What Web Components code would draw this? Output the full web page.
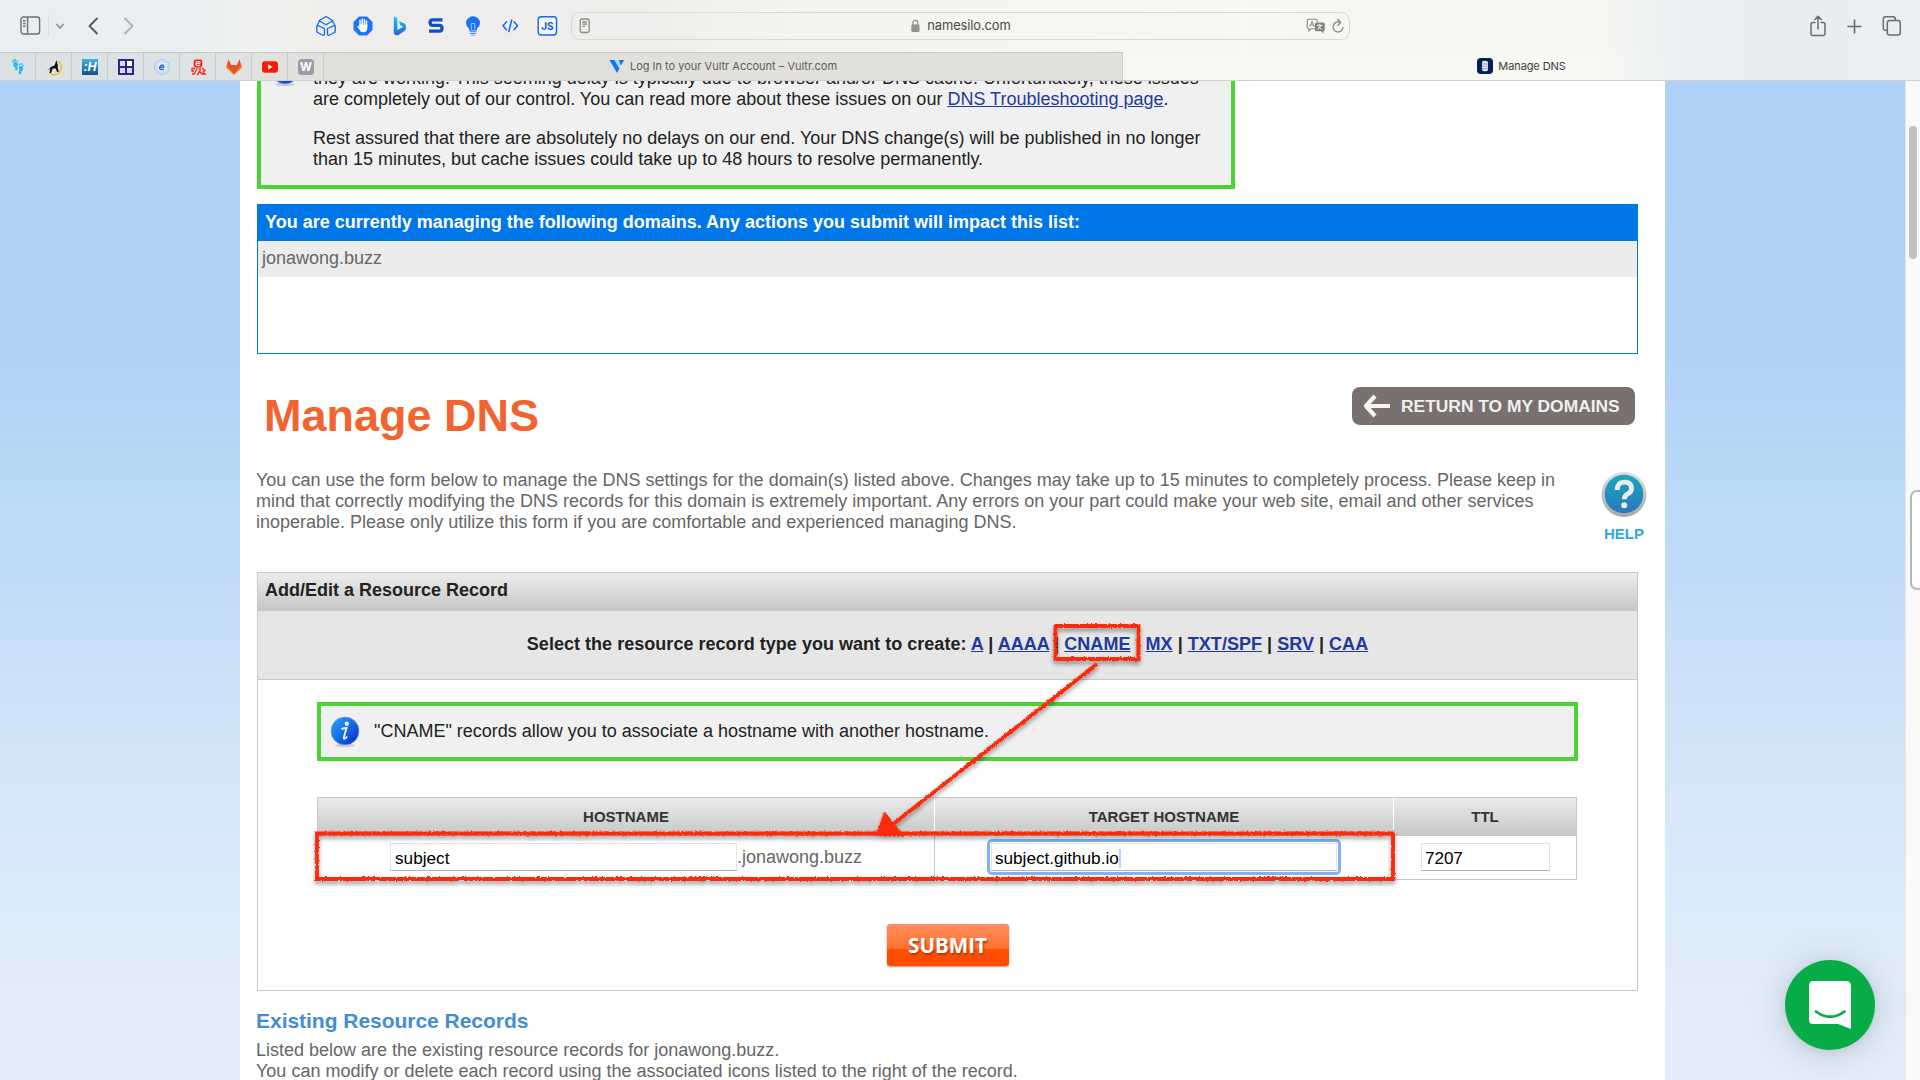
<!DOCTYPE html>
<html lang="en">
<head>
<meta charset="utf-8">
<title>Manage DNS</title>
<style>
html,body{margin:0;height:1080px;overflow:hidden}
body{font-family:"Liberation Sans",Arial,sans-serif;font-size:18px;line-height:21px;color:#222;display:flex;flex-direction:column;background:#fff}
</style>
</head>
<body>
<browser-toolbar></browser-toolbar>
<tab-strip></tab-strip>
<dns-page></dns-page>
<script>
const define=(name,html)=>{
  const t=document.createElement('template');t.innerHTML=html;
  customElements.define(name,class extends HTMLElement{
    constructor(){super();this.attachShadow({mode:'open'}).append(t.content.cloneNode(true));}
  });
};

define('browser-toolbar',`
<style>
:host{display:flex;flex:none;height:52px;box-sizing:border-box;align-items:center;background:linear-gradient(90deg,#e8eef2 0,#e9eef1 180px,#f1f2ef 265px,#eeedeb 340px,#efeeec 650px,#f3f4ef 780px,#f7f8f3 1240px,#f6f7f2 1600px,#ebf0f3 1680px,#e7edf1 1780px,#eceff1 1920px);font:14px Inter,sans-serif;color:#4a4a48}
svg{display:block;overflow:visible;flex:none}
.nav{display:flex;align-items:center;width:315px;padding-left:20px;box-sizing:border-box}
.nav i{width:1px;height:22px;background:#d8dde0;margin:0 5px 0 7px}
.ext{display:flex;width:256px;gap:14.8px;align-items:center}
.addr{display:flex;align-items:center;width:779px;height:28px;border:1px solid #d8d8d5;border-radius:9px;box-sizing:border-box;padding:0 4px 0 7px}
.mid{flex:1;display:flex;justify-content:center;align-items:center;gap:7px;padding-left:25px}
.host{font-size:12.9px;letter-spacing:-.1px;line-height:20px}
.end{margin-left:auto;display:flex;align-items:center;gap:19px;padding-right:18px}
</style>
<div class="nav">
 <svg width="21" height="20" viewBox="0 0 21 20" fill="none" stroke="#6c7174" stroke-width="1.4"><rect x="1" y="1" width="18.6" height="17" rx="2.5"/><path d="M7.6 1v17M3 4.7h2.6M3 7.5h2.6M3 10.3h2.6"/></svg>
 <i></i>
 <svg width="14" height="14" viewBox="0 0 14 14" fill="none" stroke="#8b9093" stroke-width="1.6"><path d="M2.5 5l3.5 4 3.5-4"/></svg>
 <svg style="margin-left:20px" width="12" height="18" viewBox="0 0 12 18" fill="none" stroke="#55595c" stroke-width="1.9" stroke-linecap="round" stroke-linejoin="round"><path d="M9 1.500L1.500 9 9 16.500"/></svg>
 <svg style="margin-left:23px" width="12" height="18" viewBox="0 0 12 18" fill="none" stroke="#adb1b4" stroke-width="1.900" stroke-linecap="round" stroke-linejoin="round"><path d="M2 1.500L9.500 9 2 16.500"/></svg>
</div>
<div class="ext">
 <svg width="22" height="22" viewBox="0 0 22 22" fill="none" stroke="#1668e8" stroke-width="1.3" stroke-linejoin="round"><path d="M11 1.500l7 4.200-7 4-7-4zM4.300 6.500L1.800 11v6l6 3.200q1.700.5 1.700-1.200v-5.500L2.200 10.300M17.700 6.500l2.500 4.500v6l-6 3.200q-1.700.5-1.700-1.200v-5.500l7.300-3.200"/></svg>
 <svg width="22" height="22" viewBox="0 0 22 22"><path d="M7 1.500h8L20.500 7v8L15 20.500H7L1.500 15V7z" fill="#1c74fb"/><path d="M8 10.500v-5M10.200 10V4.300M12.400 10V4.600M14.500 11V6" stroke="#fff" stroke-width="1.500" stroke-linecap="round"/><path d="M7.300 9.500h8v3.200q0 4.500-3.600 4.500-4.400 0-4.400-4.500z" fill="#fff"/><path d="M7.500 13.500L6 11.500" stroke="#fff" stroke-width="1.400" stroke-linecap="round"/></svg>
 <svg width="22" height="22" viewBox="0 0 22 22"><defs><linearGradient id="b" x1="0" y1="0" x2="0" y2="1"><stop stop-color="#23cdf5"/><stop offset="1" stop-color="#1668dd"/></linearGradient></defs><path d="M4.800 1.500l3.600 1.300v12.300l6-3.400-3-1.400-1.600-4 5.300 2q2 1.200 2 4 0 2.600-2 4l-5.700 3.700q-1.600.6-3 0-1.600-.8-1.600-2.500z" fill="url(#b)"/></svg>
 <svg width="22" height="22" viewBox="0 0 22 22" fill="none" stroke="#0c50ce" stroke-width="3.300"><path d="M17.500 4.800H7.700Q5.100 4.800 5.100 7.500t2.600 2.900h6.700q2.600 0 2.600 2.900t-2.600 2.900H4"/></svg>
 <svg width="22" height="22" viewBox="0 0 22 22"><path d="M11 1.200a7 7 0 0 1 7 7q0 3.300-3 5.200v2.200H7v-2.200Q4 11.500 4 8.200a7 7 0 0 1 7-7z" fill="#1a73f6"/><path d="M9.300 14.500v-6h3.400v6" stroke="#9fc4fa" stroke-width="1" fill="none"/><path d="M7.500 16.500h7M7.500 18.300h7M9 20h4" stroke="#5f99ef" stroke-width="1.200"/></svg>
 <svg width="22" height="22" viewBox="0 0 22 22" fill="none" stroke="#1668e8" stroke-width="1.500" stroke-linecap="round" stroke-linejoin="round"><path d="M7.500 6.800L4 10.700 7.500 14.700M15 6.800L18.500 10.700 15 14.700M12.700 5L9.800 16.500"/></svg>
 <svg width="22" height="22" viewBox="0 0 22 22"><rect x="2.200" y="1.700" width="18.300" height="18.300" rx="3" fill="#f4f5f7" stroke="#1668e8" stroke-width="1.400"/><text x="11.400" y="14.600" font-family="Inter,sans-serif" font-size="10" font-weight="700" fill="#1258cf" text-anchor="middle">JS</text></svg>
</div>
<div class="addr">
 <svg width="12" height="16" viewBox="0 0 12 16" fill="none" stroke="#8b8b89" stroke-width="1.300"><rect x="1.200" y="1" width="9" height="13.500" rx="1.800"/><path d="M3.300 4h4.800M3.300 6.200h4.800M3.300 8.400h2.800"/></svg>
 <div class="mid"><svg width="9" height="14" viewBox="0 0 9 14"><rect x=".3" y="5.500" width="8.200" height="7.500" rx="1.300" fill="#949492"/><path d="M2 6V4Q2 1.300 4.400 1.300T6.800 4v2" fill="none" stroke="#949492" stroke-width="1.300"/></svg><span class="host">namesilo.com</span></div>
 <svg width="20" height="16" viewBox="0 0 20 16"><path d="M8.500 10.700H5.500L3 13v-2.400Q1.200 10.500 1.200 8.800V3Q1.200 1.200 3 1.200h6.500q1.800 0 1.800 1.800v1.500" fill="none" stroke="#8b8b89" stroke-width="1.100"/><path d="M3.800 8.800L6 3.200l2.200 5.600M4.600 7h2.900" fill="none" stroke="#8b8b89"/><path d="M10.500 4.500h6.500q1.800 0 1.800 1.800v5q0 1.800-1.300 1.900v2.300L15 13.200h-4.500q-1.800 0-1.800-1.800V6.300q0-1.800 1.800-1.800z" fill="#858583"/><path d="M11 7.300h5.500M13.700 6v1.300M11.800 11.500L15 7.500M12.300 8.500l3.300 3" stroke="#fff" stroke-width=".9"/></svg>
 <svg style="margin-left:5px" width="14" height="16" viewBox="0 0 14 16" fill="none" stroke="#8b8b89" stroke-width="1.400"><path d="M9.500 4.600A5 5 0 1 0 12 9M6.300 1L9.700 4.600 6.300 8" stroke-linejoin="round"/></svg>
</div>
<div class="end">
 <svg width="16" height="24" viewBox="0 0 16 24" fill="none" stroke="#686c6e" stroke-width="1.500"><path d="M5 8.500H3Q1 8.500 1 10.500v9q0 2 2 2h10q2 0 2-2v-9q0-2-2-2h-2M8 15V2.500M4.700 5.500L8 2.200l3.300 3.300" stroke-linecap="round" stroke-linejoin="round"/></svg>
 <svg style="margin-left:2px" width="15" height="15" viewBox="0 0 15 15" stroke="#686c6e" stroke-width="1.600"><path d="M7.500.5v14M.5 7.500h14"/></svg>
 <svg style="margin-left:1px" width="20" height="20" viewBox="0 0 20 20" fill="none" stroke="#686c6e" stroke-width="1.500"><path d="M5 14.300H3.500Q1.300 14.300 1.300 12V3Q1.300.8 3.500.8H11q2.200 0 2.400 2.200v1.300"/><rect x="5.300" y="4.500" width="13" height="14.500" rx="2.300"/></svg>
</div>`);

define('tab-strip',`
<style>
:host{display:flex;flex:none;height:29px;box-sizing:border-box;border-bottom:1px solid #cfd1d1;font:11px Inter,sans-serif;color:#5d5d5b;background:linear-gradient(90deg,#f7f8f3 0,#f7f8f3 1600px,#ebf0f3 1680px,#e7edf1 1780px,#eceff1 1920px)}
svg{display:block;flex:none}
.bg{display:flex;width:1123px;box-sizing:border-box;border-top:1px solid #c6c6c4;border-right:1px solid #cfcfcc;background:linear-gradient(90deg,#dbe1e4 0,#dde2e4 180px,#e1e2df 270px,#e0dfdc 350px,#e2e1de 1123px)}
.pin{width:36px;box-sizing:border-box;border-right:1px solid #c9cdcf;display:flex;align-items:center;justify-content:center}
.tab{flex:1;display:flex;align-items:center;justify-content:center;gap:5px;line-height:20px;padding-bottom:1px}
.cur{color:#3c3c3b;padding-bottom:0}
.cur span{letter-spacing:-.1px}
</style>
<div class="bg">
 <div class="pin"><svg width="18" height="18" viewBox="0 0 18 18" fill="#2bb9f5"><ellipse cx="6.500" cy="6.500" rx="2.300" ry="2.900"/><ellipse cx="7.300" cy="10.500" rx="1.300" ry="1.900"/><circle cx="4" cy="3" r="1"/><circle cx="6" cy="2" r="1.100"/><circle cx="8.300" cy="2.700" r=".8"/><ellipse cx="12" cy="10.500" rx="2.100" ry="2.700"/><ellipse cx="11" cy="14.500" rx="1.300" ry="1.900"/><circle cx="10.500" cy="6.500" r=".9"/><circle cx="12.700" cy="6" r="1"/><circle cx="14.500" cy="7.500" r=".8"/></svg></div>
 <div class="pin"><svg width="18" height="18" viewBox="0 0 18 18"><path d="M13 3A7 7 0 1 1 5 15.500" fill="none" stroke="#f2c029" stroke-width="1.500"/><path d="M11.500 2l.5 2.500q1.200 2 .7 4.500l1 5h-1.600l-1.500-3.600H7.700L6 15H4.500l.8-4.500L2 13.500 6 8.800l3.500-1.300z" fill="#111"/></svg></div>
 <div class="pin"><svg width="18" height="18" viewBox="0 0 18 18"><defs><linearGradient id="h" x1="0" y1="0" x2="0" y2="1"><stop stop-color="#45b3e6"/><stop offset="1" stop-color="#144f8c"/></linearGradient></defs><rect x="1" y="1" width="16" height="16" fill="url(#h)"/><text x="9" y="13.200" font-family="Liberation Sans,sans-serif" font-weight="700" font-style="italic" font-size="12.500" fill="#fff" text-anchor="middle">:H</text></svg></div>
 <div class="pin"><svg width="18" height="18" viewBox="0 0 18 18"><rect x="1" y="1" width="16" height="16" fill="#29278b"/><path d="M3 3h5v5H3zM3 10h5v5H3zM10 10h5v5h-5z" fill="#d9def0"/><path d="M10 3h5v5h-5z" fill="#fff"/></svg></div>
 <div class="pin"><svg width="18" height="18" viewBox="0 0 18 18"><circle cx="9" cy="9" r="7.500" fill="#dbe7f6" stroke="#a5c2ea" stroke-width="1"/><circle cx="9" cy="9" r="5.400" fill="#e4edf8" stroke="#9bbbe6" stroke-width="1" stroke-dasharray="1 1"/><path d="M6.700 9.300h4Q11 7 9.200 7T6.700 9.300 9 11.500h2" fill="none" stroke="#2f6fc6" stroke-width="1.500"/></svg></div>
 <div class="pin"><svg width="18" height="18" viewBox="0 0 18 18"><path d="M6 1.500h6l1.300 1.500v4.500L12 9.500H6L4.700 7.500V3z" fill="#fa2416"/><path d="M7 5.500h4V3.800H7v3.500h4" fill="none" stroke="#fff"/><path d="M6 10.500H3v2.500h2M8.500 10L5 16H3M11 10v3l-3 4M13 10l3 2.500-2 1.500 2 2h-3l-2-2" fill="none" stroke="#fa2416" stroke-width="1.300"/></svg></div>
 <div class="pin"><svg width="18" height="18" viewBox="0 0 18 18"><path d="M3.500 1.500L1 9.500l8 7.500 8-7.500-2.500-8L12 7H6z" fill="#fc7c26"/><path d="M3.500 1.500L6 7h6l2.500-5.500L16 7.500 9 16 2 7.500z" fill="#e4532a"/></svg></div>
 <div class="pin"><svg width="18" height="18" viewBox="0 0 18 18"><rect x="1" y="3.300" width="16" height="11.500" rx="3" fill="#f91c0c"/><path d="M7.300 6.500v5l4.200-2.500z" fill="#fff"/></svg></div>
 <div class="pin"><svg width="18" height="18" viewBox="0 0 18 18"><rect x="1" y="1" width="16" height="16" rx="3.500" fill="#9a9ba9"/><text x="9" y="13.300" font-family="Inter,sans-serif" font-weight="700" font-size="11.500" fill="#fff" text-anchor="middle">W</text></svg></div>
 <div class="tab"><svg width="16" height="16" viewBox="0 0 16 16"><path d="M.5 2h5l5 8.500L8 15z" fill="#0a78fa"/><path d="M5.500 2h2.500l3 5-1.500 2.500z" fill="#9fd3ff"/><path d="M9.500 2H15l-3 5.500z" fill="#0a78fa"/></svg><span>Log In to your Vultr Account – Vultr.com</span></div>
</div>
<div class="tab cur"><svg width="16" height="16" viewBox="0 0 16 16"><rect width="16" height="16" rx="3.800" fill="#04205a"/><path d="M8 2.800q3 0 3 2v6.500q0 2-3 2t-3-2V4.800q0-2 3-2z" fill="#e9edf5"/><path d="M4.800 6h6.400M4.800 8.300h6.400M4.800 10.600h6.400" stroke="#7d8db0" stroke-width=".8"/></svg><span>Manage DNS</span></div>`);

define('info-icon',`
<style>:host{display:block}svg{display:block;overflow:visible}</style>
<svg width="30" height="32" viewBox="0 0 30 32"><defs><linearGradient id="g" x1="0" y1="0" x2="1" y2="1"><stop stop-color="#29a3f8"/><stop offset=".5" stop-color="#176be8"/><stop offset="1" stop-color="#0a20c0"/></linearGradient></defs><ellipse cx="15" cy="29.500" rx="10" ry="1.800" fill="#cdcdcd"/><circle cx="15" cy="15" r="14" fill="url(#g)" stroke="#7fa5e2" stroke-width=".7"/><circle cx="16.800" cy="7.800" r="2.200" fill="#dff0ff"/><path d="M11.300 13.200q3-1.300 5.200-1.300l-2.600 9.300q-.4 1.800.8 1.500 1.200-.5 2.500-2.200" fill="none" stroke="#dff0ff" stroke-width="2"/></svg>`);

define('notice-box',`
<style>:host{display:flex;box-sizing:border-box;border:4px solid #4cd437;background:#f0f0f0;color:#222}</style><slot></slot>`);

define('domain-list',`
<style>
:host{display:block;box-sizing:border-box;height:150px;border:1px solid #0078d7}
.h{height:36px;background:#0077e8;color:#fff;font-weight:700;line-height:34px;padding-left:7px}
.r{height:36px;background:#ececec;color:#666;line-height:34px;padding-left:4px}
</style>
<div class="h">You are currently managing the following domains. Any actions you submit will impact this list:</div>
<div class="r">jonawong.buzz</div>`);

define('page-heading',`
<style>
:host{display:flex;height:116px;justify-content:space-between;align-items:flex-start;padding:33px 3px 0 7px;box-sizing:border-box}
h1{margin:2px 0 0;font-size:45px;line-height:53px;color:#f2642f;font-weight:700}
a{display:flex;align-items:center;width:283px;height:38px;box-sizing:border-box;padding-left:10px;gap:10px;background:#797170;border-radius:8px;color:#f2f0ef;font-weight:700;font-size:17.400px;white-space:nowrap;line-height:36px}
</style>
<h1>Manage DNS</h1>
<a><svg width="29" height="28" viewBox="0 0 29 28" fill="none" stroke="#f6f4f3" stroke-width="4.200"><path d="M28 14H4M13 4L4 14l9 10" stroke-linejoin="round"/></svg><span>RETURN TO MY DOMAINS</span></a>`);

define('intro-row',`
<style>
:host{display:flex;height:102px;justify-content:space-between;color:#666;white-space:nowrap}
p{margin:0 0 0 -1px}
.help{display:flex;flex-direction:column;align-items:center;width:48px;margin:0 -10px 0 0;color:#2fa8dc;font-weight:700;font-size:15px;line-height:18px;gap:5px}
</style>
<p>You can use the form below to manage the DNS settings for the domain(s) listed above. Changes may take up to 15 minutes to completely process. Please keep in<br>mind that correctly modifying the DNS records for this domain is extremely important. Any errors on your part could make your web site, email and other services<br>inoperable. Please only utilize this form if you are comfortable and experienced managing DNS.</p>
<div class="help"><svg width="48" height="50" viewBox="0 0 48 50"><defs><linearGradient id="r" x1="0" y1="0" x2="0" y2="1"><stop stop-color="#dedede"/><stop offset="1" stop-color="#a9a9ad"/></linearGradient><linearGradient id="q" x1="0" y1="0" x2="0" y2="1"><stop stop-color="#18aabd"/><stop offset="1" stop-color="#2b76bd"/></linearGradient></defs><circle cx="24" cy="24.500" r="22.500" fill="url(#r)"/><circle cx="24" cy="24" r="19.300" fill="url(#q)"/><path d="M17.200 20q0-7.800 7.300-7.800 7 0 7 6.300 0 3.300-3.500 5.200-3.600 1.800-3.600 5.600" fill="none" stroke="#ececec" stroke-width="4.800"/><circle cx="24.200" cy="35.300" r="3" fill="#ececec"/></svg><span>HELP</span></div>`);

define('record-form',`
<style>
:host{display:block;box-sizing:border-box;height:419px;border:1px solid #c8c8c8;background:#fff}
.h{height:38px;line-height:34px;padding-left:7px;font-weight:700;background:linear-gradient(#ececec,#c6c6c6)}
.types{height:69px;box-sizing:border-box;border-bottom:1px solid #c8c8c8;background:#e6e6e6;display:flex;justify-content:center;font-weight:700;line-height:66px;white-space:pre;letter-spacing:.03px}
a{color:#1f3a9c;text-decoration:underline}
notice-box{margin:22px 59px 0;height:59px;padding:10px 0 0 9px;gap:14px;line-height:31px}
.grid{margin:36px 60px 0 59px;display:grid;grid-template-columns:617px 459px 184px;height:83px;grid-template-rows:39px 44px;width:1261px;box-sizing:border-box}
.th{box-sizing:border-box;border-top:1px solid #c8c8c8;background:linear-gradient(#ebebeb,#c6c6c6);font-weight:700;font-size:15px;color:#333;text-align:center;line-height:37px}
.th+.th{border-left:1px solid #fff}
.td{box-sizing:border-box;border-bottom:1px solid #c8c8c8;border-left:1px solid #c8c8c8;display:flex;align-items:flex-start;color:#666}
.l{border-left:1px solid #c8c8c8}.e{border-right:1px solid #c8c8c8}
.in{box-sizing:border-box;height:28px;margin-top:7px;border:1px solid #e4e4e4;border-bottom-color:#b0b0b0;background:#fff;color:#000;line-height:29px;padding-left:4px;font-size:17.200px;display:flex}
.focus{outline:3px solid #82b1f8;outline-offset:1px;border-radius:1px;padding-left:3px;letter-spacing:-.03px}
.caret{width:2px;height:19px;background:#b9d6fb;margin-top:5px}
.btn{margin:44px auto 0;width:122px;height:42px;border-radius:3px;background:linear-gradient(#ff8f5e 0,#ff7233 58%,#ff4f00 60%,#ff4a00);box-shadow:0 1px 2px #9a9a9a;color:#fff;font:700 20.600px/42px "Open Sans",sans-serif;text-align:center;text-shadow:1px 2px 2px #a83a08}
</style>
<div class="h">Add/Edit a Resource Record</div>
<div class="types"><span>Select the resource record type you want to create: <a>A</a> | <a>AAAA</a> | <a>CNAME</a> | <a>MX</a> | <a>TXT/SPF</a> | <a>SRV</a> | <a>CAA</a></span></div>
<notice-box><info-icon></info-icon><span>"CNAME" records allow you to associate a hostname with another hostname.</span></notice-box>
<div class="grid">
 <div class="th l">HOSTNAME</div><div class="th">TARGET HOSTNAME</div><div class="th e">TTL</div>
 <div class="td" style="padding-left:72px"><div class="in" style="width:347px">subject</div><span style="line-height:43px">.jonawong.buzz</span></div>
 <div class="td" style="padding-left:56px"><div class="in focus" style="width:346px">subject.github.io<i class="caret"></i></div></div>
 <div class="td e" style="padding-left:27px"><div class="in" style="width:129px;padding-left:3px;font-size:17px">7207</div></div>
</div>
<div class="btn">SUBMIT</div>`);

define('mark-up',`
<style>:host{position:absolute;left:0;top:0;pointer-events:none}svg{display:block}</style>
<svg width="1920" height="999" viewBox="0 81 1920 999" fill="none" stroke="#fb2a0b" stroke-width="3.800">
<defs><filter id="f" filterUnits="userSpaceOnUse" x="280" y="600" width="1150" height="310"><feTurbulence type="fractalNoise" baseFrequency=".45" numOctaves="2" seed="4" result="n"/><feDisplacementMap in="SourceGraphic" in2="n" xChannelSelector="R" yChannelSelector="G" scale="3" result="d"/><feDropShadow in="d" dx="0" dy="3" stdDeviation="2" flood-color="#000" flood-opacity=".4"/></filter></defs>
<g filter="url(#f)"><path d="M1055.500 626H1138.500V659H1055.500zM317 833.500H1393V879H317zM1097 664L892 825"/><path d="M885 815L900 834 878 834z" fill="#fb2a0b"/></g></svg>`);

define('chat-launcher',`
<style>:host{position:absolute;left:1785px;top:879px;width:90px;height:90px;border-radius:50%;background:#07ac46;box-shadow:0 2px 10px rgba(0,0,0,.09),0 3px 40px rgba(0,0,0,.16)}svg{display:block}</style>
<svg width="90" height="90" viewBox="0 0 90 90"><path d="M28 21h33q5 0 5 5v43l-13-5H28q-4 0-4-4.500V26q0-5 4-5z" fill="#fff"/><path d="M31 51.500q14 10.500 28.500 0" fill="none" stroke="#07ac46" stroke-width="2.700" stroke-linecap="round"/></svg>`);

define('page-scrollbar',`
<style>:host{display:block;position:relative;width:15px;height:999px;box-sizing:border-box;border-left:1px solid #e6e6e6;background:#fafafa;padding-top:45px}
.t{width:8px;height:133px;border-radius:4px;background:#c1c1c1;margin:0 0 0 3px}
.s{position:absolute;left:4px;top:409px;width:14px;height:96px;border:2px solid #b6b6b6;border-radius:7px;background:#fff}</style>
<div class="t"></div><div class="s"></div>`);

define('dns-page',`
<style>
:host{display:flex;position:relative;flex:none;height:999px;overflow:hidden;background:linear-gradient(#afd1f5 0,#afd2f5 270px,#b4d5f9 320px,#b7d8f4 365px,#bcdcf8 440px,#c0dbf8 490px,#cbe0f8 580px,#d3e6f8 690px,#d7e7fa 730px,#dbecfc 830px,#deecf8 855px,#e1edfa 900px,#e2eefa 999px)}
main{width:1425px;margin-left:240px;height:999px;background:#fff;padding:0 27px 0 17px;box-sizing:border-box;overflow:hidden;white-space:nowrap}
page-scrollbar{margin-left:240px}
.top{width:978px;height:108px;border-top:0;padding-left:9px;gap:13px}
.top info-icon{margin:-26.500px 0 0}
.top p{margin:-13px 0 18px}
.top p+p{margin:0}
.top a{color:#1f3a9c;text-decoration:underline}
domain-list{margin-top:15px}
h2{margin:19px 0 0 -1px;font-size:21px;line-height:22px;color:#448dd2;letter-spacing:-.03px}
.rec{margin:8px 0 0 -1px;color:#666}
</style>
<main>
<notice-box class="top"><info-icon></info-icon><div><p>they are working. This seeming delay is typically due to browser and/or DNS cache. Unfortunately, these issues<br>are completely out of our control. You can read more about these issues on our <a>DNS Troubleshooting page</a>.</p><p>Rest assured that there are absolutely no delays on our end. Your DNS change(s) will be published in no longer<br>than 15 minutes, but cache issues could take up to 48 hours to resolve permanently.</p></div></notice-box>
<domain-list></domain-list>
<page-heading></page-heading>
<intro-row></intro-row>
<record-form></record-form>
<h2>Existing Resource Records</h2>
<p class="rec">Listed below are the existing resource records for jonawong.buzz.<br>You can modify or delete each record using the associated icons listed to the right of the record.</p>
</main>
<page-scrollbar></page-scrollbar>
<mark-up></mark-up>
<chat-launcher></chat-launcher>`);
</script>
</body>
</html>
